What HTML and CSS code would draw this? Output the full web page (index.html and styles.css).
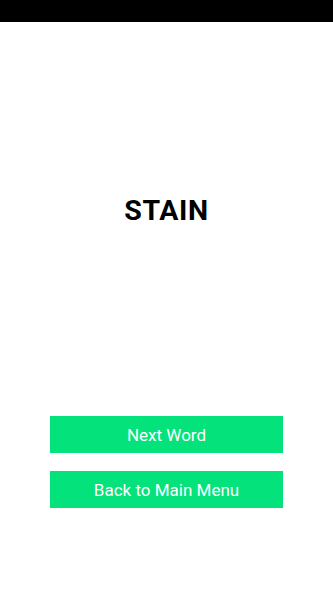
FILE: index.html
```html
<!DOCTYPE html>
<html>
<head>
<meta charset="utf-8">
<link rel="stylesheet" href="styles.css">
</head>
<body>
<div class="status-bar"></div>
<main class="screen">
  <h1 class="word">STAIN</h1>
  <div class="actions">
    <button class="btn">Next Word</button>
    <button class="btn">Back to Main Menu</button>
  </div>
</main>
</body>
</html>
```
FILE: styles.css
```css
html, body {
  margin: 0;
  padding: 0;
  background: #ffffff;
  font-family: Roboto, "Noto Sans", sans-serif;
}
.status-bar {
  height: 22px;
  background: #000000;
}
.screen {
  display: flex;
  flex-direction: column;
  align-items: center;
  padding-top: 172px;
}
.word {
  margin: 0;
  font-size: 28.5px;
  line-height: 33px;
  font-weight: 700;
  color: #000000;
  letter-spacing: 0.6px;
}
.actions {
  margin-top: 189px;
  display: flex;
  flex-direction: column;
  gap: 18px;
  width: 233px;
}
.btn {
  height: 37px;
  border: none;
  border-radius: 0;
  background: #04e27b;
  color: #ffffff;
  font-family: Roboto, "Noto Sans", sans-serif;
  font-size: 17px;
  padding: 0;
}
```
